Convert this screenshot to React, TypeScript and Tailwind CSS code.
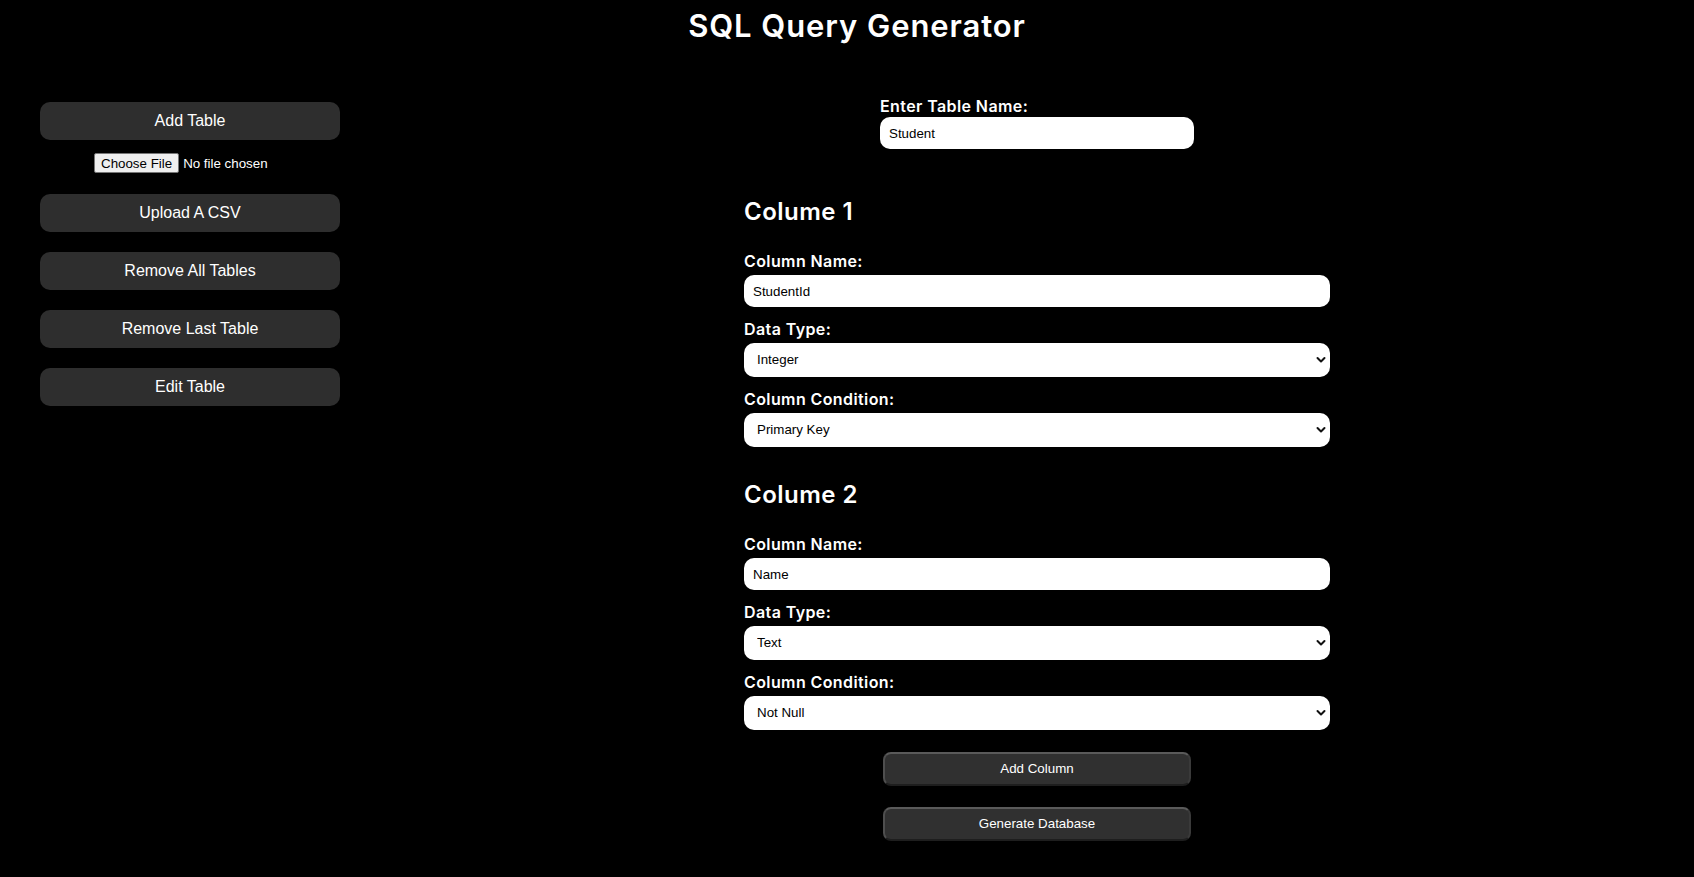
import React from "react";

const headFont = "font-['Inter','Noto_Sans',sans-serif]";
const bodyFont = "font-['Liberation_Sans',Arial,sans-serif]";

function Chevron() {
  return (
    <svg
      className="pointer-events-none absolute right-[4px] top-1/2 -translate-y-1/2"
      width="10"
      height="7"
      viewBox="0 0 10 7"
      fill="none"
    >
      <path d="M1.5 1.5 L5 5 L8.5 1.5" stroke="#111" strokeWidth="2" strokeLinecap="round" strokeLinejoin="round" />
    </svg>
  );
}

function Field({ label, children, first }: { label: string; children: React.ReactNode; first?: boolean }) {
  return (
    <div className={first ? "mt-[25px]" : "mt-[12px]"}>
      <div className={`${headFont} text-[16px] font-semibold leading-[20px] mb-[4px] tracking-[0.025em]`}>{label}</div>
      {children}
    </div>
  );
}

function TextInput({ value }: { value: string }) {
  return (
    <input
      defaultValue={value}
      className={`${bodyFont} block h-[32px] w-full rounded-[10px] bg-white px-[9px] text-[13.33px] text-black outline-none`}
    />
  );
}

function Select({ value, options }: { value: string; options: string[] }) {
  return (
    <div className="relative">
      <select
        defaultValue={value}
        className={`${bodyFont} block h-[34px] w-full appearance-none rounded-[10px] bg-white pl-[13px] text-[13.33px] text-black outline-none`}
      >
        {options.map((o) => (
          <option key={o}>{o}</option>
        ))}
      </select>
      <Chevron />
    </div>
  );
}

const types = ["Integer", "Text", "Real", "Blob", "Numeric"];
const conds = ["Primary Key", "Not Null", "Unique", "None"];

function ColumnBlock({ n, name, type, cond }: { n: number; name: string; type: string; cond: string }) {
  return (
    <div>
      <h2 className={`${headFont} mt-[34px] text-[24px] font-semibold leading-[28px] tracking-[0.02em]`}>Colume {n}</h2>
      <Field label="Column Name:" first>
        <TextInput value={name} />
      </Field>
      <Field label="Data Type:">
        <Select value={type} options={types} />
      </Field>
      <Field label="Column Condition:">
        <Select value={cond} options={conds} />
      </Field>
    </div>
  );
}

function SideButton({ children, className = "" }: { children: React.ReactNode; className?: string }) {
  return (
    <button
      className={`${bodyFont} block h-[38px] w-full rounded-[10px] bg-[#2e2e2e] text-[16px] text-white ${className}`}
    >
      {children}
    </button>
  );
}

function MainButton({ children, className = "" }: { children: React.ReactNode; className?: string }) {
  return (
    <button
      className={`${bodyFont} block h-[34px] w-[308px] rounded-[8px] border-2 border-solid border-t-[#5a5a5a] border-l-[#4e4e4e] border-r-[#3a3a3a] border-b-[#1e1e1e] bg-[#303030] text-[13.33px] text-white ${className}`}
    >
      {children}
    </button>
  );
}

export default function App() {
  return (
    <div className="min-h-screen w-full bg-black text-white">
      <h1 className={`${headFont} pl-[20px] pt-[8px] text-center text-[31px] font-semibold leading-[36px] tracking-[0.03em]`}>
        SQL Query Generator
      </h1>
      <div className="flex">
        <div className="w-[380px] shrink-0 pl-[40px] pr-[40px] pt-[58px]">
          <SideButton>Add Table</SideButton>
          <div className="mt-[13px] flex justify-center">
            <input
              type="file"
              className={`${bodyFont} block w-[192px] text-[13.33px] leading-[20px] text-white file:mr-[4px] file:h-[20px] file:rounded-[2px] file:border file:border-solid file:border-[#767676] file:bg-[#efefef] file:px-[6px] file:text-black`}
            />
          </div>
          <SideButton className="mt-[20px]">Upload A CSV</SideButton>
          <SideButton className="mt-[20px]">Remove All Tables</SideButton>
          <SideButton className="mt-[20px]">Remove Last Table</SideButton>
          <SideButton className="mt-[20px]">Edit Table</SideButton>
        </div>
        <div className="flex flex-1 flex-col items-center pt-[52px]">
          <div className="w-[314px] mb-[15px]">
            <div className={`${headFont} text-[16px] font-semibold leading-[20px] mb-[1px] tracking-[0.025em]`}>
              Enter Table Name:
            </div>
            <TextInput value="Student" />
          </div>
          <div className="w-[586px]">
            <ColumnBlock n={1} name="StudentId" type="Integer" cond="Primary Key" />
            <ColumnBlock n={2} name="Name" type="Text" cond="Not Null" />
          </div>
          <MainButton className="mt-[22px]">Add Column</MainButton>
          <MainButton className="mt-[21px]">Generate Database</MainButton>
        </div>
      </div>
    </div>
  );
}
